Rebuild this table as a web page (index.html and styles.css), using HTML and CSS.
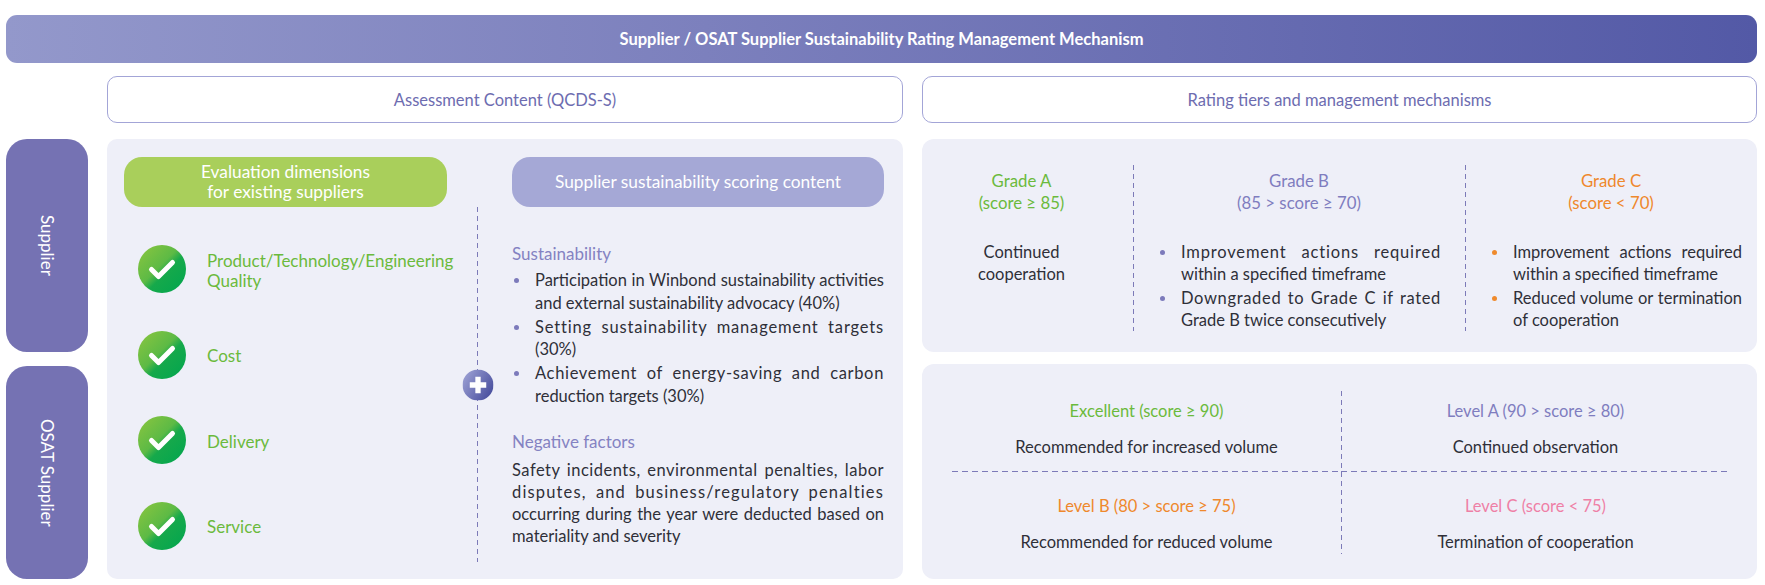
FILE: index.html
```html
<!DOCTYPE html>
<html lang="en">
<head>
<meta charset="utf-8">
<title>Supplier / OSAT Supplier Sustainability Rating Management Mechanism</title>
<link rel="stylesheet" href="styles.css">
</head>
<body>
<svg class="defs" width="0" height="0" aria-hidden="true">
  <defs>
    <linearGradient id="chkGrad" x1="0" y1="0" x2="1" y2="1">
      <stop offset="0" stop-color="#8dc63f"/>
      <stop offset="0.45" stop-color="#5dba45"/>
      <stop offset="0.58" stop-color="#16a94b"/>
      <stop offset="1" stop-color="#00a54f"/>
    </linearGradient>
    <linearGradient id="plusGrad" x1="0" y1="0" x2="1" y2="0.6">
      <stop offset="0" stop-color="#a3a7d8"/>
      <stop offset="1" stop-color="#4d53a1"/>
    </linearGradient>
  </defs>
</svg>
<div class="page">
  <div class="topbar">Supplier / OSAT Supplier Sustainability Rating Management Mechanism</div>
  <div class="main">
    <div class="corner"></div>
    <div class="head">Assessment Content (QCDS-S)</div>
    <div class="head">Rating tiers and management mechanisms</div>

    <div class="tabs">
      <div class="tab"><span class="tab-text">Supplier</span></div>
      <div class="tab"><span class="tab-text">OSAT Supplier</span></div>
    </div>

    <div class="assess">
      <div class="pill pill-green">Evaluation dimensions<br>for existing suppliers</div>
      <div class="pill pill-purple">Supplier sustainability scoring content</div>

      <div class="checks">
        <div class="check-item">
          <svg class="chk" viewBox="0 0 48 48"><circle cx="24" cy="24" r="24" fill="url(#chkGrad)"/><path d="M13.5 24.5 L20.5 31.5 L34.5 17.5" fill="none" stroke="#fff" stroke-width="5" stroke-linecap="round" stroke-linejoin="round"/></svg>
          <span class="check-label">Product/Technology/Engineering<br>Quality</span>
        </div>
        <div class="check-item">
          <svg class="chk" viewBox="0 0 48 48"><circle cx="24" cy="24" r="24" fill="url(#chkGrad)"/><path d="M13.5 24.5 L20.5 31.5 L34.5 17.5" fill="none" stroke="#fff" stroke-width="5" stroke-linecap="round" stroke-linejoin="round"/></svg>
          <span class="check-label">Cost</span>
        </div>
        <div class="check-item">
          <svg class="chk" viewBox="0 0 48 48"><circle cx="24" cy="24" r="24" fill="url(#chkGrad)"/><path d="M13.5 24.5 L20.5 31.5 L34.5 17.5" fill="none" stroke="#fff" stroke-width="5" stroke-linecap="round" stroke-linejoin="round"/></svg>
          <span class="check-label">Delivery</span>
        </div>
        <div class="check-item">
          <svg class="chk" viewBox="0 0 48 48"><circle cx="24" cy="24" r="24" fill="url(#chkGrad)"/><path d="M13.5 24.5 L20.5 31.5 L34.5 17.5" fill="none" stroke="#fff" stroke-width="5" stroke-linecap="round" stroke-linejoin="round"/></svg>
          <span class="check-label">Service</span>
        </div>
      </div>

      <div class="divider">
        <svg class="plus" viewBox="0 0 32 32"><circle cx="16" cy="16" r="16" fill="url(#plusGrad)"/><path d="M16 7.5 V24.5 M7.5 16 H24.5" stroke="#fff" stroke-width="5.5"/></svg>
      </div>

      <div class="scoring">
        <div class="sub">Sustainability</div>
        <ul class="dots dots-purple">
          <li><span class="ln">Participation in Winbond sustainability activities</span><span class="ln">and external sustainability advocacy (40%)</span></li>
          <li><span class="ln sp-c">Setting sustainability management targets</span><span class="ln">(30%)</span></li>
          <li><span class="ln sp-b">Achievement of energy-saving and carbon</span><span class="ln">reduction targets (30%)</span></li>
        </ul>
        <div class="sub sub-neg">Negative factors</div>
        <p class="para"><span class="ln sp-a">Safety incidents, environmental penalties, labor</span><span class="ln sp-d">disputes, and business/regulatory penalties</span><span class="ln">occurring during the year were deducted based on</span><span class="ln">materiality and severity</span></p>
      </div>
    </div>

    <div class="rating">
      <div class="panel tiers">
        <div class="tier tier-a">
          <div class="tier-title green">Grade A<br>(score &#8805; 85)</div>
          <div class="tier-body center">Continued<br>cooperation</div>
        </div>
        <div class="tier tier-b">
          <div class="tier-title purple">Grade B<br>(85 &gt; score &#8805; 70)</div>
          <ul class="dots dots-purple tier-list">
            <li><span class="ln sp-c">Improvement actions required</span><span class="ln">within a specified timeframe</span></li>
            <li><span class="ln sp-b">Downgraded to Grade C if rated</span><span class="ln">Grade B twice consecutively</span></li>
          </ul>
        </div>
        <div class="tier tier-c">
          <div class="tier-title orange">Grade C<br>(score &lt; 70)</div>
          <ul class="dots dots-orange tier-list">
            <li><span class="ln">Improvement actions required</span><span class="ln">within a specified timeframe</span></li>
            <li><span class="ln">Reduced volume or termination</span><span class="ln">of cooperation</span></li>
          </ul>
        </div>
      </div>

      <div class="panel levels">
        <div class="level lv-top lv-left">
          <div class="level-title green">Excellent (score &#8805; 90)</div>
          <div class="level-body">Recommended for increased volume</div>
        </div>
        <div class="level lv-top lv-right">
          <div class="level-title purple">Level A (90 &gt; score &#8805; 80)</div>
          <div class="level-body">Continued observation</div>
        </div>
        <div class="level lv-bottom lv-left">
          <div class="level-title orange">Level B (80 &gt; score &#8805; 75)</div>
          <div class="level-body">Recommended for reduced volume</div>
        </div>
        <div class="level lv-bottom lv-right">
          <div class="level-title pink">Level C (score &lt; 75)</div>
          <div class="level-body">Termination of cooperation</div>
        </div>
      </div>
    </div>
  </div>
</div>
</body>
</html>
```

FILE: styles.css
```css
* { box-sizing: border-box; }

html, body {
  margin: 0;
  padding: 0;
  background: #ffffff;
}

body {
  font-family: Lato, "Noto Sans", "Liberation Sans", sans-serif;
  color: #2f2f38;
  font-size: 16.5px;
}

.defs {
  position: absolute;
  width: 0;
  height: 0;
}

.page {
  width: 1765px;
  height: 585px;
  padding: 15px 8px 0 6px;
  display: flex;
  flex-direction: column;
  gap: 13px;
}

.topbar {
  height: 48px;
  flex: none;
  border-radius: 11px;
  background: linear-gradient(90deg, #9398cb 0%, #7c80bd 40%, #5359a6 100%);
  color: #ffffff;
  font-weight: 700;
  font-size: 16.5px;
  display: flex;
  align-items: center;
  justify-content: center;
}

.main {
  display: grid;
  grid-template-columns: 82px 796px 835px;
  grid-template-rows: 47px 440px;
  column-gap: 19px;
  row-gap: 16px;
}

.head {
  border: 1.5px solid #a3a5d7;
  border-radius: 10px;
  background: #ffffff;
  color: #6d6cb0;
  font-size: 16.5px;
  display: flex;
  align-items: center;
  justify-content: center;
}

/* side tabs */
.tabs {
  display: flex;
  flex-direction: column;
  gap: 14px;
}

.tab {
  flex: 1;
  background: #7572b3;
  border-radius: 21px;
  display: flex;
  align-items: center;
  justify-content: center;
}

.tab-text {
  writing-mode: vertical-rl;
  color: #ffffff;
  font-size: 17px;
}

/* assessment panel */
.assess {
  background: #eeeff8;
  border-radius: 10px;
  padding: 18px 19px 17px 17px;
  display: grid;
  grid-template-columns: 323px 30px 1px 34px 372px;
  grid-template-rows: 50px 1fr;
}

.pill {
  border-radius: 18px;
  color: #ffffff;
  display: flex;
  align-items: center;
  justify-content: center;
  text-align: center;
  font-size: 17.3px;
  line-height: 20px;
}

.pill-green {
  grid-column: 1;
  grid-row: 1;
  background: #a9cf5b;
}

.pill-purple {
  grid-column: 5;
  grid-row: 1;
  background: #a5a8d6;
}

.checks {
  grid-column: 1;
  grid-row: 2;
  display: flex;
  flex-direction: column;
  gap: 37.5px;
  padding: 38px 0 0 14px;
}

.check-item {
  display: flex;
  align-items: center;
  gap: 21px;
  height: 48px;
}

.chk {
  width: 48px;
  height: 48px;
  flex: none;
}

.check-label {
  color: #6bba3c;
  font-size: 17px;
  line-height: 20px;
  padding-top: 3px;
}

.divider {
  grid-column: 3;
  grid-row: 2;
  position: relative;
  background: repeating-linear-gradient(to bottom, #7c7ab8 0 5px, transparent 5px 9px);
}

.plus {
  position: absolute;
  left: 50%;
  top: 50%;
  width: 31px;
  height: 31px;
  transform: translate(-50%, -50%);
}

.scoring {
  grid-column: 5;
  grid-row: 2;
  padding-top: 36px;
}

.sub {
  color: #8482c2;
  font-size: 17px;
  line-height: 22px;
}

.sub-neg {
  margin-top: 24px;
}

.ln {
  display: block;
  white-space: nowrap;
  text-align: justify;
  text-align-last: justify;
}

.ln:last-child {
  text-align-last: auto;
}

.sp-a { letter-spacing: 0.03em; }
.sp-b { letter-spacing: 0.04em; }
.sp-c { letter-spacing: 0.05em; }
.sp-d { letter-spacing: 0.07em; }

.dots {
  list-style: none;
  margin: 0;
  padding: 0;
}

.dots li {
  position: relative;
  padding-left: 23px;
  font-size: 16.5px;
  line-height: 22.5px;
}

.dots li + li {
  margin-top: 1.5px;
}

.dots li::before {
  content: "";
  position: absolute;
  left: 1.5px;
  top: 9px;
  width: 5px;
  height: 5px;
  border-radius: 50%;
}

.dots-purple li::before { background: #7c7abb; }
.dots-orange li::before { background: #ef8a2d; }

.scoring .dots {
  margin-top: 4px;
}

.para {
  margin: 6px 0 0;
  font-size: 16.5px;
  line-height: 22px;
}

/* rating side */
.rating {
  display: flex;
  flex-direction: column;
  gap: 12px;
  min-height: 0;
}

.panel {
  flex: 1 1 0;
  min-height: 0;
  background: #eeeff8;
  border-radius: 12px;
}

.tiers {
  display: grid;
  grid-template-columns: 211px 332px 1fr;
  padding: 26px 0 23px 0;
}

.tier {
  padding-top: 5px;
}

.tier + .tier {
  background: repeating-linear-gradient(to bottom, #7c7ab8 0 5px, transparent 5px 9px) left top / 1px 100% no-repeat;
}

.tier-a { padding-right: 12px; }
.tier-b { padding-left: 27px; padding-right: 24px; }
.tier-c { padding-left: 27px; padding-right: 15px; }

.tier-title {
  text-align: center;
  font-size: 16.8px;
  line-height: 22px;
}

.tier-b .tier-title { margin-left: -27px; margin-right: -24px; }
.tier-c .tier-title { margin-left: -27px; margin-right: -15px; }

.tier-body {
  margin-top: 27px;
  font-size: 16.5px;
  line-height: 22px;
}

.center { text-align: center; }

.tier-list {
  margin-top: 27px;
}

.tier-list li {
  padding-left: 21px;
  font-size: 16.5px;
  line-height: 22px;
}

.tier-list li + li { margin-top: 2px; }

.tier-list li::before {
  left: 0;
  top: 8.5px;
}

.green { color: #6bba3c; }
.purple { color: #7f7dbf; }
.orange { color: #ef882c; }
.pink { color: #ee7fa6; }

.levels {
  display: grid;
  grid-template-columns: 1fr 1fr;
  grid-template-rows: 81px 82px;
  padding: 27px 27px 24px 30px;
}

.level {
  text-align: center;
}

.lv-top {
  padding-top: 9px;
  background: repeating-linear-gradient(to right, #7c7ab8 0 6px, transparent 6px 10px) left bottom / 100% 1px no-repeat;
}

.lv-bottom {
  padding-top: 23px;
}

.lv-right {
  position: relative;
}

.lv-right::before {
  content: "";
  position: absolute;
  left: 0;
  top: 0;
  bottom: 0;
  width: 1px;
  background: repeating-linear-gradient(to bottom, #7c7ab8 0 5px, transparent 5px 9px);
}

.level-title {
  font-size: 16.5px;
  line-height: 22px;
}

.level-body {
  margin-top: 14px;
  font-size: 16.5px;
  line-height: 22px;
}
```
